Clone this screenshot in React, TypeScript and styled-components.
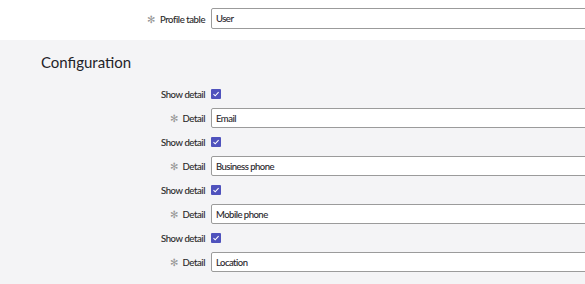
import styled, { createGlobalStyle } from 'styled-components';

const GlobalStyle = createGlobalStyle`
    html, body {
        margin: 0;
        padding: 0;
        overflow: hidden;
        background: #f4f4f6;
        font-family: Lato, "Open Sans", sans-serif;
        color: #2e2e2e;
    }
`

const Page = styled.div`
    width: 585px;
    height: 284px;
    overflow: hidden;
    background: #f4f4f6;
`

const TopSection = styled.div`
    background: #ffffff;
    padding: 8px 0 11px 0;
`

const ConfigSection = styled.div`
    padding: 13px 0 0 0;
`

const Heading = styled.h2`
    margin: 0 0 13px 41px;
    font-size: 15px;
    font-weight: 400;
    line-height: 18px;
    color: #1f2329;
`

const Rows = styled.div`
    display: flex;
    flex-direction: column;
    gap: 4px;
`

const Row = styled.div<{ $height: number }>`
    display: flex;
    align-items: center;
    gap: 6px;
    height: ${p => p.$height}px;
`

const Label = styled.label`
    width: 205px;
    flex: none;
    font-size: 9.5px;
    letter-spacing: -0.4px;
    text-align: right;
    color: #262626;
    white-space: nowrap;
    -webkit-text-stroke: 0.1px #262626;
`

const Required = styled.span`
    color: #999999;
    font-size: 10px;
    margin-right: 5px;
    -webkit-text-stroke: 0;
`

const TextInput = styled.input<{ $height: number }>`
    box-sizing: border-box;
    flex: none;
    width: 480px;
    height: ${p => p.$height}px;
    border: 1px solid #9b9b9b;
    border-radius: 2px;
    background: #ffffff;
    padding: 0 4px;
    font-family: Lato, "Open Sans", sans-serif;
    font-size: 9.5px;
    letter-spacing: -0.5px;
    color: #1f2329;
    -webkit-text-stroke: 0.1px #1f2329;
    outline: none;
`

const CheckBox = styled.span`
    width: 10px;
    height: 10px;
    border-radius: 1px;
    background: #4f52bd;
    display: flex;
    align-items: center;
    justify-content: center;
`

const details = ['Email', 'Business phone', 'Mobile phone', 'Location'];

const App = () => {
    return (
        <>
            <GlobalStyle />
            <Page>
                <TopSection>
                    <Row $height={21}>
                        <Label><Required>✻</Required>Profile table</Label>
                        <TextInput $height={21} defaultValue="User" />
                    </Row>
                </TopSection>
                <ConfigSection>
                    <Heading>Configuration</Heading>
                    <Rows>
                        {details.map(d => (
                            <Rows key={d}>
                                <Row $height={20}>
                                    <Label>Show detail</Label>
                                    <CheckBox>
                                        <svg width="8" height="8" viewBox="0 0 8 8">
                                            <path d="M1.5 4.2 L3.2 5.8 L6.6 2.2" stroke="#fff" strokeWidth="1.1" fill="none" />
                                        </svg>
                                    </CheckBox>
                                </Row>
                                <Row $height={20}>
                                    <Label><Required>✻</Required>Detail</Label>
                                    <TextInput $height={20} defaultValue={d} />
                                </Row>
                            </Rows>
                        ))}
                    </Rows>
                </ConfigSection>
            </Page>
        </>
    )
}

export default App
